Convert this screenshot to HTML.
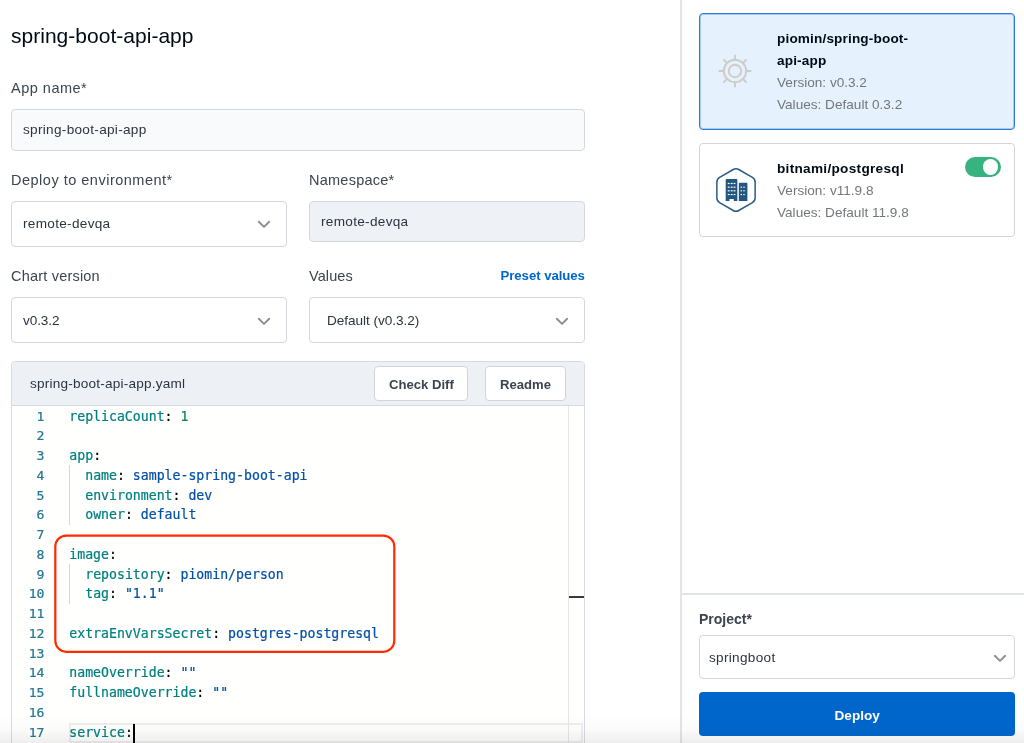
<!DOCTYPE html>
<html lang="en">
<head>
<meta charset="utf-8">
<title>spring-boot-api-app</title>
<style>
  html, body { margin: 0; padding: 0; }
  body {
    width: 1024px; height: 743px; overflow: hidden; position: relative;
    background: #ffffff;
    font-family: "Liberation Sans", sans-serif;
    color: #3b444f;
  }
  .abs { position: absolute; }
  .t { position: absolute; white-space: nowrap; line-height: 1; }
  .title { left: 11px; top: 25px; font-size: 21px; color: #000a14; letter-spacing: 0.02px; }
  .label { font-size: 14.5px; color: #3b444f; letter-spacing: 0.5px; }
  .field {
    position: absolute; box-sizing: border-box;
    border: 1px solid #d4d8dd; border-radius: 4px; background: #fff;
  }
  .field.ro { background: #f9fafb; }
  .field.dis { background: #eef1f5; }
  .val { font-size: 13.6px; color: #2c3440; letter-spacing: 0.3px; }
  .chev { position: absolute; }
  .link { font-size: 13.2px; font-weight: bold; color: #0066cc; letter-spacing:-0.05px; }
  .btn {
    position: absolute; box-sizing: border-box; background: #fff;
    border: 1px solid #d0d5db; border-radius: 4px;
  }
  .btxt { font-size: 13.1px; font-weight: bold; color: #3b444f; }

  /* editor */
  .ed-wrap {
    position: absolute; left: 11px; top: 361px; width: 574px; height: 400px;
    box-sizing: border-box; border: 1px solid #d6dbe1; border-radius: 4px 4px 0 0;
    background: #fffffe; overflow: hidden;
  }
  .ed-head {
    position: absolute; left: 0; top: 0; right: 0; height: 43px;
    background: #edf1f6; border-bottom: 1px solid #d6dbe1;
  }
  .code {
    position: absolute; left: 0; top: 0;
    font-family: "DejaVu Sans Mono", "Liberation Mono", monospace;
    font-size: 13.15px; line-height: 19.76px; white-space: pre;
  }
  .ln { position: absolute; left: 0; width: 44.5px; text-align: right; color: #237893;
        font-family: "DejaVu Sans Mono", "Liberation Mono", monospace; font-size: 13.15px; line-height: 19.76px; white-space: pre; }
  .cl { position: absolute; left: 69.3px; color: #000;
        font-family: "DejaVu Sans Mono", "Liberation Mono", monospace; font-size: 13.2px; line-height: 19.76px; white-space: pre; }
  .cl, .ln { -webkit-text-stroke: 0.22px; }
  .k { color: #008080; }
  .s { color: #0451a5; }
  .n { color: #098658; }
  .guide { position: absolute; width: 1px; background: #d8d8d8; }

  /* right side */
  .divider { position: absolute; left: 680px; top: 0; width: 1.5px; height: 743px; background: #e1e4e8; }
  .card { position: absolute; box-sizing: border-box; border-radius: 4px; }
  .ctitle { font-size: 13.6px; font-weight: bold; color: #000a14; letter-spacing:0.15px; }
  .cmeta { font-size: 13.6px; color: #73777c; letter-spacing: 0px; }
</style>
</head>
<body>
<div id="root" style="position:absolute; left:0; top:0; width:1024px; height:743px; will-change:transform;">

<!-- LEFT FORM -->
<div class="t title" id="title">spring-boot-api-app</div>

<div class="t label" id="l_app" style="left:11px; top:81px;">App name*</div>
<div class="field ro" style="left:11px; top:109px; width:574px; height:42px;"></div>
<div class="t val" id="v_app" style="left:23px; top:123px;">spring-boot-api-app</div>

<div class="t label" id="l_env" style="left:11px; top:173px;">Deploy to environment*</div>
<div class="field" style="left:11px; top:201px; width:276px; height:46px;"></div>
<div class="t val" id="v_env" style="left:23px; top:217px;">remote-devqa</div>
<svg class="chev" style="left:257px; top:219.6px;" width="14" height="9" viewBox="0 0 14 9"><path d="M1.8 1.8 L7 6.9 L12.2 1.8" fill="none" stroke="#8b8e92" stroke-width="1.9" stroke-linecap="round" stroke-linejoin="round"/></svg>

<div class="t label" id="l_ns" style="left:309px; top:173px; letter-spacing:0.25px;">Namespace*</div>
<div class="field dis" style="left:309px; top:201px; width:276px; height:41px;"></div>
<div class="t val" id="v_ns" style="left:321px; top:215px;">remote-devqa</div>

<div class="t label" id="l_cv" style="left:11px; top:269px; letter-spacing:0.2px;">Chart version</div>
<div class="field" style="left:11px; top:297px; width:276px; height:46px;"></div>
<div class="t val" id="v_cv" style="left:23px; top:314px; letter-spacing:-0.1px;">v0.3.2</div>
<svg class="chev" style="left:257px; top:316.6px;" width="14" height="9" viewBox="0 0 14 9"><path d="M1.8 1.8 L7 6.9 L12.2 1.8" fill="none" stroke="#8b8e92" stroke-width="1.9" stroke-linecap="round" stroke-linejoin="round"/></svg>

<div class="t label" id="l_val" style="left:309px; top:269px; letter-spacing:0.1px;">Values</div>
<div class="t link" id="l_preset" style="left:500.5px; top:269px;">Preset values</div>
<div class="field" style="left:309px; top:297px; width:276px; height:46px;"></div>
<div class="t val" id="v_val" style="left:327px; top:314px; letter-spacing:-0.05px;">Default (v0.3.2)</div>
<svg class="chev" style="left:555px; top:316.6px;" width="14" height="9" viewBox="0 0 14 9"><path d="M1.8 1.8 L7 6.9 L12.2 1.8" fill="none" stroke="#8b8e92" stroke-width="1.9" stroke-linecap="round" stroke-linejoin="round"/></svg>

<!-- EDITOR -->
<div class="ed-wrap">
  <div class="ed-head"></div>
</div>
<div class="t val" id="e_file" style="left:30px; top:377px; letter-spacing:0.2px;">spring-boot-api-app.yaml</div>
<div class="btn" style="left:374px; top:366px; width:94px; height:35px;"></div>
<div class="t btxt" id="b_diff" style="left:389px; top:378px;">Check Diff</div>
<div class="btn" style="left:485px; top:366px; width:81px; height:35px;"></div>
<div class="t btxt" id="b_readme" style="left:500px; top:378px;">Readme</div>

<!-- editor ruler lines -->
<div class="abs" style="left:569px; top:596px; width:15px; height:2px; background:#3a3a3a;"></div>

<!-- current line highlight -->
<div class="abs" style="left:69px; top:722.5px; width:513.5px; height:20px; box-sizing:border-box; border:2px solid #eeeeee;"></div>

<div class="abs" style="left:568px; top:406px; width:1px; height:340px; background:#e6e6e6;"></div>
<!-- indent guides -->
<div class="guide" style="left:69px; top:465px; height:60px;"></div>
<div class="guide" style="left:69px; top:564px; height:40px;"></div>

<!-- line numbers -->
<div class="ln" id="lns" style="top:406.5px;">1
2
3
4
5
6
7
8
9
10
11
12
13
14
15
16
17</div>

<!-- code -->
<div class="cl" id="code" style="top:406.5px;"><span class="k">replicaCount</span>: <span class="n">1</span>

<span class="k">app</span>:
  <span class="k">name</span>: <span class="s">sample-spring-boot-api</span>
  <span class="k">environment</span>: <span class="s">dev</span>
  <span class="k">owner</span>: <span class="s">default</span>

<span class="k">image</span>:
  <span class="k">repository</span>: <span class="s">piomin/person</span>
  <span class="k">tag</span>: <span class="s">"1.1"</span>

<span class="k">extraEnvVarsSecret</span>: <span class="s">postgres-postgresql</span>

<span class="k">nameOverride</span>: <span class="s">""</span>
<span class="k">fullnameOverride</span>: <span class="s">""</span>

<span class="k">service</span>:</div>
<!-- cursor -->
<div class="abs" style="left:132.5px; top:724px; width:2px; height:19px; background:#000;"></div>

<!-- red annotation -->
<svg class="abs" style="left:50px; top:530px;" width="352" height="128" viewBox="50 530 352 128">
  <rect x="55.3" y="535.6" width="339" height="116.2" rx="11" ry="11" fill="none" stroke="#ff2a00" stroke-width="2.2"/>
</svg>

<!-- RIGHT PANEL -->
<div class="divider"></div>

<div class="card" style="left:699px; top:13px; width:316px; height:116.5px; background:#e5f2fe; border:1px solid #2d7cd5; box-shadow: inset 0 0 0 1px rgba(47,125,214,0.35);"></div>
<svg class="abs" style="left:717.3px; top:53.4px;" width="36" height="36" viewBox="-18 -18 36 36">
  <g fill="none" stroke="#cfcbc8" stroke-width="1.9" stroke-linecap="round">
    <circle cx="0" cy="0" r="11.2"/>
    <circle cx="0" cy="0" r="6.2"/>
    <path d="M0 -11.2V-15.6M0 11.2V15.6M-11.2 0H-15.6M11.2 0H15.6M7.9 -7.9L11 -11M-7.9 -7.9L-11 -11M7.9 7.9L11 11M-7.9 7.9L-11 11"/>
  </g>
</svg>
<div class="t ctitle" id="c1a" style="left:777px; top:32px;">piomin/spring-boot-</div>
<div class="t ctitle" id="c1b" style="left:777px; top:54px;">api-app</div>
<div class="t cmeta" id="c1c" style="left:777px; top:76px;">Version: v0.3.2</div>
<div class="t cmeta" id="c1d" style="left:777px; top:98px;">Values: Default 0.3.2</div>

<div class="card" style="left:699px; top:143px; width:316px; height:94px; background:#fff; border:1px solid #d0d5db;"></div>
<svg class="abs" style="left:713.55px; top:166.05px;" width="44" height="48" viewBox="-22 -24 44 48">
  <path d="M-2.75 -20.51 A5.5 5.5 0 0 1 2.75 -20.51 L16.39 -12.64 A5.5 5.5 0 0 1 19.14 -7.87 L19.14 7.87 A5.5 5.5 0 0 1 16.39 12.64 L2.75 20.51 A5.5 5.5 0 0 1 -2.75 20.51 L-16.39 12.64 A5.5 5.5 0 0 1 -19.14 7.87 L-19.14 -7.87 A5.5 5.5 0 0 1 -16.39 -12.64 Z" fill="#fff" stroke="#2a5a86" stroke-width="1.5"/>
  <g fill="#22557f">
    <path d="M-10.3 -10.1 q0 -0.9 0.9 -0.9 h9.85 q0.9 0 0.9 0.9 V11 h-3.55 v-2.1 h-4.35 v2.1 h-3.75 Z"/>
    <path d="M2.85 -6.6 q0 -0.7 0.7 -0.7 h7.15 q0.7 0 0.7 0.7 V11 h-8.55 Z"/>
  </g>
  <g fill="#fff"><rect x="-8.25" y="-7.10" width="1.9" height="1.2"/><rect x="-5.25" y="-7.10" width="1.9" height="1.2"/><rect x="-2.45" y="-7.10" width="1.9" height="1.2"/><rect x="-8.25" y="-3.40" width="1.9" height="1.2"/><rect x="-5.25" y="-3.40" width="1.9" height="1.2"/><rect x="-2.45" y="-3.40" width="1.9" height="1.2"/><rect x="-8.25" y="0.20" width="1.9" height="1.2"/><rect x="-5.25" y="0.20" width="1.9" height="1.2"/><rect x="-2.45" y="0.20" width="1.9" height="1.2"/><rect x="-8.25" y="3.95" width="1.9" height="1.2"/><rect x="-5.25" y="3.95" width="1.9" height="1.2"/><rect x="-2.45" y="3.95" width="1.9" height="1.2"/><rect x="4.57" y="-3.40" width="1.4" height="1.2"/><rect x="7.30" y="-3.40" width="1.4" height="1.2"/><rect x="4.57" y="0.20" width="1.4" height="1.2"/><rect x="7.30" y="0.20" width="1.4" height="1.2"/><rect x="4.57" y="3.95" width="1.4" height="1.2"/><rect x="7.30" y="3.95" width="1.4" height="1.2"/></g>
</svg>
<div class="t ctitle" id="c2a" style="left:777px; top:162px; letter-spacing:0.3px;">bitnami/postgresql</div>
<div class="t cmeta" id="c2b" style="left:777px; top:184px;">Version: v11.9.8</div>
<div class="t cmeta" id="c2c" style="left:777px; top:206px;">Values: Default 11.9.8</div>
<div class="abs" style="left:965px; top:157px; width:35.5px; height:19.8px; border-radius:10px; background:#36b37e;"></div>
<div class="abs" style="left:983px; top:159.2px; width:15.4px; height:15.4px; border-radius:50%; background:#fff;"></div>

<!-- bottom project panel -->
<div class="abs" style="left:681px; top:593px; width:343px; height:1.5px; background:#e1e4e8;"></div>
<div class="t label" id="l_proj" style="left:699px; top:612px; font-weight:bold; font-size:14px; letter-spacing:0;">Project*</div>
<div class="field" style="left:699px; top:635px; width:316px; height:44px;"></div>
<div class="t val" id="v_proj" style="left:709px; top:651px;">springboot</div>
<svg class="chev" style="left:993.2px; top:653.5px;" width="14" height="9" viewBox="0 0 14 9"><path d="M1.8 1.8 L7 6.9 L12.2 1.8" fill="none" stroke="#8b8e92" stroke-width="1.9" stroke-linecap="round" stroke-linejoin="round"/></svg>
<div class="abs" style="left:699px; top:692px; width:316px; height:44px; border-radius:4px; background:#0066cc;"></div>
<div class="t" id="b_deploy" style="left:834.5px; top:709px; font-size:13.6px; font-weight:bold; color:#fff;">Deploy</div>

<!-- bottom fade -->
<div class="abs" style="left:0; top:715px; width:1024px; height:28px; background:linear-gradient(to bottom, rgba(0,0,0,0) 0%, rgba(0,0,0,0.02) 55%, rgba(0,0,0,0.065) 100%); pointer-events:none;"></div>

</div>
</body>
</html>
